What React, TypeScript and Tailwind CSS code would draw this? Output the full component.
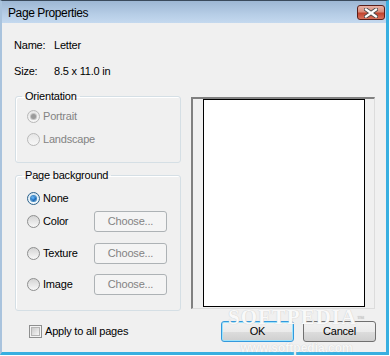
import React from "react"

const font = { fontFamily: '"Liberation Sans", Arial, sans-serif' }

function Radio({ checked, disabled }: { checked?: boolean; disabled?: boolean }) {
  if (disabled) {
    return (
      <span className="flex h-[13px] w-[13px] shrink-0 items-center justify-center rounded-full border border-[#b8b8b8] bg-[linear-gradient(to_bottom,#e6e6e6,#f7f7f7)]">
        {checked && <span className="h-[5px] w-[5px] rounded-full bg-[#9a9a9a] shadow-[0_0_0_1px_#c4c4c4]" />}
      </span>
    )
  }
  return (
    <span
      className={
        "flex h-[13px] w-[13px] shrink-0 items-center justify-center rounded-full border " +
        (checked ? "border-[#2c628b] bg-[linear-gradient(to_bottom,#d7e7f3,#f5f9fc)]" : "border-[#8e8f8f] bg-[linear-gradient(to_bottom,#d4d4d4,#f8f8f8)]")
      }
    >
      {checked && <span className="h-[5px] w-[5px] rounded-full bg-[radial-gradient(circle_at_40%_35%,#6fc2ff,#1565b8_60%,#0b3c73)] shadow-[0_0_0_1px_#3f8ac4]" />}
    </span>
  )
}

function ChooseButton() {
  return (
    <div className="flex h-[21px] w-[73px] items-center justify-center rounded-[3px] border border-[#adb2b5] bg-[#f4f4f4] text-[#838383]">
      Choose...
    </div>
  )
}

function Legend({ children }: { children: React.ReactNode }) {
  return <legend className="ml-[6px] px-[3px] leading-[13px] text-black">{children}</legend>
}

export default function App() {
  return (
    <div className="relative h-[356px] w-[390px] bg-white text-[11px] tracking-[-0.2px] text-black" style={font}>
      <div className="flex h-[355px] w-[389px] flex-col border-t border-t-[#3a4a5c] border-l-2 border-l-[#a9c3dd] border-r-[3px] border-r-[#38afe0] border-b-[3px] border-b-[#38afe0]">
        {/* Title bar */}
        <div className="flex h-[22px] shrink-0 items-start bg-[linear-gradient(to_bottom,#9db7d4,#b6cde6_60%,#c4d9ef)]">
          <span className="mt-[5px] pl-[6px] text-[12px] leading-[14px] tracking-[-0.4px] text-black">Page Properties</span>
          <div className="ml-auto mr-[1px] mt-[4px] flex h-[15px] w-[28px] items-center justify-center rounded-[3px] border border-[#5a1f1a] bg-[linear-gradient(to_bottom,#e9b2a6,#d88d7c_45%,#c1432e_55%,#d8735e)]">
            <svg width="14" height="10" viewBox="0 0 14 10">
              <path d="M2 1.5 L12 8.5 M12 1.5 L2 8.5" stroke="#4a4a4a" strokeWidth="4" strokeLinecap="square" />
              <path d="M2 1.5 L12 8.5 M12 1.5 L2 8.5" stroke="#ffffff" strokeWidth="2.2" strokeLinecap="square" />
            </svg>
          </div>
        </div>

        {/* Client */}
        <div className="flex flex-1 flex-col bg-[#f0f0f0] pl-[12px] leading-[13px]">
          <div className="mt-[16px] flex">
            <span className="w-[40px]">Name:</span>
            <span>Letter</span>
          </div>
          <div className="mt-[13px] flex">
            <span className="w-[40px]">Size:</span>
            <span>8.5 x 11.0 in</span>
          </div>

          <div className="mt-[12px] flex">
            <div className="ml-[1px] flex w-[166px] flex-col">
              <fieldset className="h-[73px] rounded-[3px] border border-[#d5dfe5] shadow-[inset_1px_1px_0_#ffffff]">
                <Legend>Orientation</Legend>
                <div className="mt-[5px] flex flex-col gap-[7px] pl-[11px] text-[#838383]">
                  <div className="flex h-[16px] items-center gap-[3px]">
                    <Radio checked disabled />
                    <span>Portrait</span>
                  </div>
                  <div className="flex h-[16px] items-center gap-[3px]">
                    <Radio disabled />
                    <span>Landscape</span>
                  </div>
                </div>
              </fieldset>

              <fieldset className="mt-[6px] h-[142px] rounded-[3px] border border-[#d5dfe5] shadow-[inset_1px_1px_0_#ffffff]">
                <Legend>Page background</Legend>
                <div className="flex flex-col pl-[11px]">
                  <div className="mt-[8px] flex h-[16px] items-center gap-[3px]">
                    <Radio checked />
                    <span>None</span>
                  </div>
                  <div className="mt-[5px] flex h-[21px] items-center">
                    <div className="flex w-[67px] items-center gap-[3px]">
                      <Radio />
                      <span>Color</span>
                    </div>
                    <ChooseButton />
                  </div>
                  <div className="mt-[11px] flex h-[21px] items-center">
                    <div className="flex w-[67px] items-center gap-[3px]">
                      <Radio />
                      <span>Texture</span>
                    </div>
                    <ChooseButton />
                  </div>
                  <div className="mt-[10px] flex h-[21px] items-center">
                    <div className="flex w-[67px] items-center gap-[3px]">
                      <Radio />
                      <span>Image</span>
                    </div>
                    <ChooseButton />
                  </div>
                </div>
              </fieldset>
            </div>

            {/* Preview */}
            <div className="ml-[10px] mt-[7px] flex h-[212px] w-[184px] justify-center border-t-2 border-l-2 border-t-[#808080] border-l-[#808080] border-r border-b border-r-[#dcdcdc] border-b-[#dcdcdc]">
              <div className="h-[208px] w-[162px] border border-black bg-white" />
            </div>
          </div>

          <div className="mt-[10px] flex items-center">
            <div className="ml-[15px] flex items-center gap-[3px]">
              <span className="flex h-[13px] w-[13px] items-center justify-center border border-[#8e8f8f] bg-[#f4f4f4]">
                <span className="h-[9px] w-[9px] border border-[#b5b5b5] bg-[linear-gradient(135deg,#cbcbcb,#f6f6f6)]" />
              </span>
              <span>Apply to all pages</span>
            </div>
            <div className="ml-auto mr-[10px] flex gap-[9px]">
              <div className="flex h-[21px] w-[73px] items-center justify-center rounded-[3px] border border-[#3399dd] bg-[linear-gradient(to_bottom,#f2f2f2,#ebebeb_50%,#dddddd_51%,#cfcfcf)] shadow-[inset_0_0_0_1px_#9fe3fb]">
                OK
              </div>
              <div className="flex h-[21px] w-[73px] items-center justify-center rounded-[3px] border border-[#707070] bg-[linear-gradient(to_bottom,#f2f2f2,#ebebeb_50%,#dddddd_51%,#cfcfcf)]">
                Cancel
              </div>
            </div>
          </div>
        </div>
      </div>

      {/* watermark */}
      <div className="pointer-events-none absolute left-[228px] top-[305px] flex flex-col items-center">
        <span
          className="text-[21px] font-bold leading-[24px] tracking-[1px] text-[#f9f9f9] [text-shadow:0_0_1px_#bdbdbd]"
          style={{ fontFamily: '"Liberation Serif", serif' }}
        >
          SOFTPEDIA<sup className="text-[7px] text-[#cfcfcf]">™</sup>
        </span>
        <span className="mt-[12px] text-[12px] font-bold leading-[14px] tracking-[0px] text-[#f7f7f7] [text-shadow:0_0_1px_#c4c4c4]">
          www.softpedia.com
        </span>
      </div>
    </div>
  )
}
